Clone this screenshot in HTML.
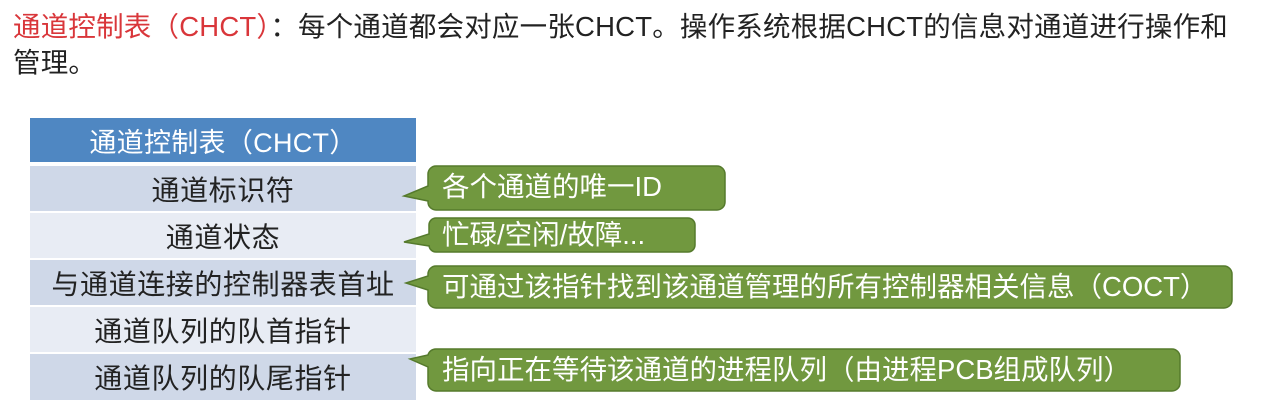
<!DOCTYPE html>
<html><head><meta charset="utf-8"><style>
body{margin:0;width:1271px;height:416px;background:#fff;position:relative;overflow:hidden;font-family:"Liberation Sans","Noto Sans CJK SC",sans-serif;}
.t{position:absolute;left:13px;font-size:27.5px;line-height:32px;color:#222;white-space:nowrap;letter-spacing:0.2px}
.r{color:#d9363a}
.row{position:absolute;left:30px;width:386px;text-align:center;font-size:28px;color:#222;display:flex;align-items:center;justify-content:center;white-space:nowrap;letter-spacing:0.6px}
.bt{position:absolute;font-size:27.5px;line-height:32px;color:#fff;white-space:nowrap}
</style></head><body>
<div class="t" style="top:11px"><span class="r">通道控制表（CHCT）</span>：每个通道都会对应一张CHCT。操作系统根据CHCT的信息对通道进行操作和</div>
<div class="t" style="top:47px">管理。</div>

<div class="row" style="top:118px;height:44px;background:#4f87c2;color:#fff;font-size:27px;letter-spacing:0.3px">通道控制表（CHCT）</div>
<div class="row" style="top:166px;height:45px;background:#cfd8e8">通道标识符</div>
<div class="row" style="top:213px;height:45px;background:#e8ecf4">通道状态</div>
<div class="row" style="top:260px;height:45px;background:#cfd8e8">与通道连接的控制器表首址</div>
<div class="row" style="top:307px;height:45px;background:#e8ecf4">通道队列的队首指针</div>
<div class="row" style="top:354px;height:46px;background:#cfd8e8">通道队列的队尾指针</div>

<svg width="1271" height="416" style="position:absolute;left:0;top:0">
<g fill="#71983f" stroke="#557a2c" stroke-width="1.5">
<path d="M436 166 H717 a8 8 0 0 1 8 8 V202 a8 8 0 0 1 -8 8 H436 a8 8 0 0 1 -8 -8 V201 L404 196 L428 186 V174 a8 8 0 0 1 8 -8Z"/>
<path d="M436 218 H688 a7 7 0 0 1 7 7 V245 a7 7 0 0 1 -7 7 H436 a7 7 0 0 1 -7 -7 V246 L404 242 L429 234 V225 a7 7 0 0 1 7 -7Z"/>
<path d="M436 266 H1224 a8 8 0 0 1 8 8 V300 a8 8 0 0 1 -8 8 H436 a8 8 0 0 1 -8 -8 V290 L406 283 L428 276 V274 a8 8 0 0 1 8 -8Z"/>
<path d="M436 349 H1172 a8 8 0 0 1 8 8 V383 a8 8 0 0 1 -8 8 H436 a8 8 0 0 1 -8 -8 V367 L410 359 L428 355 a8 8 0 0 1 8 -6Z"/>
</g></svg>
<div class="bt" style="left:442px;top:171px">各个通道的唯一ID</div>
<div class="bt" style="left:442px;top:219px">忙碌/空闲/故障...</div>
<div class="bt" style="left:442px;top:271px">可通过该指针找到该通道管理的所有控制器相关信息（COCT）</div>
<div class="bt" style="left:442px;top:354px">指向正在等待该通道的进程队列（由进程PCB组成队列）</div>
</body></html>
